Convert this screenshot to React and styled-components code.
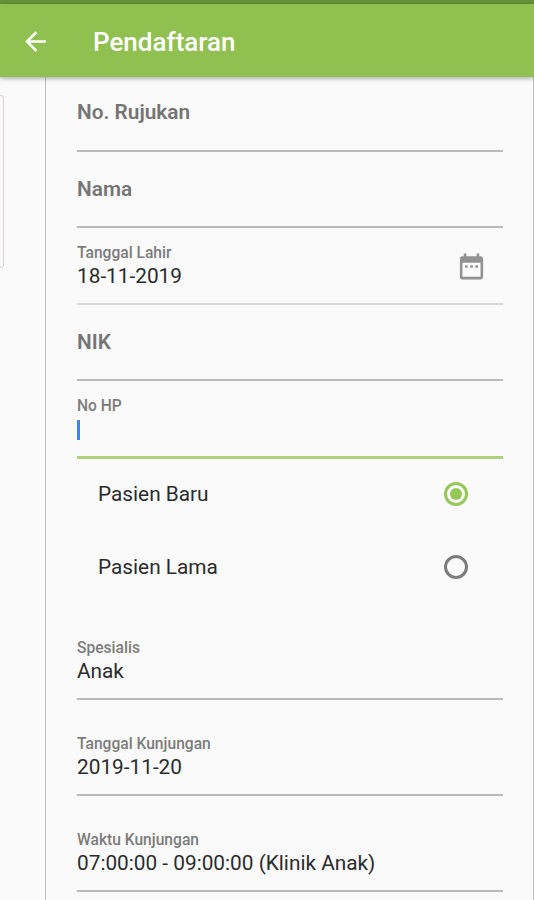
import React, { useState } from "react";
import styled, { createGlobalStyle } from "styled-components";
import { MdArrowBack, MdDateRange } from "react-icons/md";

const GlobalStyle = createGlobalStyle`
  * {
    box-sizing: border-box;
  }
  body {
    margin: 0;
    background-color: #fafafa;
    font-family: Roboto, "Liberation Sans", sans-serif;
  }
`;

const Screen = styled.div`
  display: flex;
  flex-direction: column;
  width: 534px;
  height: 900px;
  overflow: hidden;
  background-color: #fafafa;
`;

const StatusBar = styled.div`
  flex: none;
  height: 4px;
  background-color: #6a943a;
`;

const AppBar = styled.header`
  display: flex;
  flex: none;
  align-items: center;
  height: 73px;
  padding-left: 20px;
  background-color: #8fc050;
  color: #fff;
  box-shadow: 0 1px 5px rgba(0, 0, 0, 0.38);
  z-index: 1;
  h1 {
    margin: 2px 0 0 42px;
    font-size: 26px;
    line-height: 30px;
    font-weight: 500;
  }
`;

const BackButton = styled.button`
  display: flex;
  padding: 1px 0 0;
  border: none;
  background: none;
  color: inherit;
  font-size: 31px;
  cursor: pointer;
`;

const Stepper = styled.main`
  display: flex;
  flex: 1;
  min-height: 0;
`;

const PreviousStep = styled.div`
  flex: none;
  width: 45px;
  padding-top: 18px;
`;

const PreviousCard = styled.div`
  width: 4px;
  height: 173px;
  border: 1px solid #d8d2d2;
  border-left: none;
  border-radius: 0 6px 6px 0;
`;

const Form = styled.form`
  flex: 1;
  padding: 0 30px 0 31px;
  border-left: 1px solid #bdbdbd;
  border-right: 1px solid #bdbdbd;
`;

const lines = {
  normal: { color: "#bababa", width: 2 },
  disabled: { color: "#d8d8d8", width: 2 },
  focused: { color: "#aed17c", width: 3 }
};

const Field = styled.div`
  display: flex;
  align-items: flex-end;
  justify-content: space-between;
  height: ${props => props.$height}px;
  padding-bottom: 13px;
  border-bottom: ${props => lines[props.$line].width}px solid
    ${props => lines[props.$line].color};
  svg {
    margin-right: 16px;
    margin-bottom: 8px;
    font-size: 31px;
    color: #929292;
  }
`;

const Placeholder = styled.label`
  padding-bottom: ${props => (props.$first ? 13 : 12)}px;
  font-size: 20.8px;
  line-height: 24px;
  font-weight: 600;
  color: #757575;
`;

const FieldText = styled.div`
  display: flex;
  flex-direction: column;
`;

const Label = styled.label`
  font-size: 15.6px;
  line-height: 19px;
  font-weight: 500;
  color: #7c7c7c;
`;

const Value = styled.div`
  display: flex;
  align-items: center;
  height: 27px;
  font-size: 20.8px;
  line-height: 27px;
  color: #2b2b2b;
  white-space: nowrap;
`;

const Caret = styled.span`
  width: 3px;
  height: 20px;
  background-color: #3c86ea;
`;

const RadioGroup = styled.div`
  height: 146px;
`;

const RadioRow = styled.label`
  display: flex;
  align-items: center;
  justify-content: space-between;
  height: 73px;
  padding: 0 35px 4px 21px;
  font-size: 20.8px;
  color: #2b2b2b;
  cursor: pointer;
  input {
    appearance: none;
    display: grid;
    place-items: center;
    width: 24px;
    height: 24px;
    margin: 0;
    border: 3px solid #7c7c7c;
    border-radius: 50%;
    outline: none;
  }
  input:checked {
    border-color: #96c857;
  }
  input:checked::before {
    content: "";
    width: 12px;
    height: 12px;
    border-radius: 50%;
    background-color: #96c857;
  }
`;

const patientTypes = ["Pasien Baru", "Pasien Lama"];

const TextField = ({
  label,
  value,
  height,
  line = "normal",
  icon,
  focused,
  first
}) => (
  <Field $height={height} $line={line}>
    {value || focused ? (
      <FieldText>
        <Label>{label}</Label>
        <Value>{focused ? <Caret /> : value}</Value>
      </FieldText>
    ) : (
      <Placeholder $first={first}>{label}</Placeholder>
    )}
    {icon}
  </Field>
);

const App = () => {
  const [patient, setPatient] = useState("Pasien Baru");

  return (
    <Screen>
      <GlobalStyle />
      <StatusBar />
      <AppBar>
        <BackButton type="button">
          <MdArrowBack />
        </BackButton>
        <h1>Pendaftaran</h1>
      </AppBar>
      <Stepper>
        <PreviousStep>
          <PreviousCard />
        </PreviousStep>
        <Form>
          <TextField label="No. Rujukan" height={75} first />
          <TextField label="Nama" height={76} />
          <TextField
            label="Tanggal Lahir"
            value="18-11-2019"
            height={77}
            line="disabled"
            icon={<MdDateRange />}
          />
          <TextField label="NIK" height={76} />
          <TextField label="No HP" height={78} line="focused" focused />
          <RadioGroup>
            {patientTypes.map(item => (
              <RadioRow key={item}>
                {item}
                <input
                  type="radio"
                  name="patient"
                  checked={patient === item}
                  onChange={() => setPatient(item)}
                />
              </RadioRow>
            ))}
          </RadioGroup>
          <TextField label="Spesialis" value="Anak" height={95} />
          <TextField
            label="Tanggal Kunjungan"
            value="2019-11-20"
            height={96}
          />
          <TextField
            label="Waktu Kunjungan"
            value="07:00:00 - 09:00:00 (Klinik Anak)"
            height={96}
          />
        </Form>
      </Stepper>
    </Screen>
  );
};

export default App;
